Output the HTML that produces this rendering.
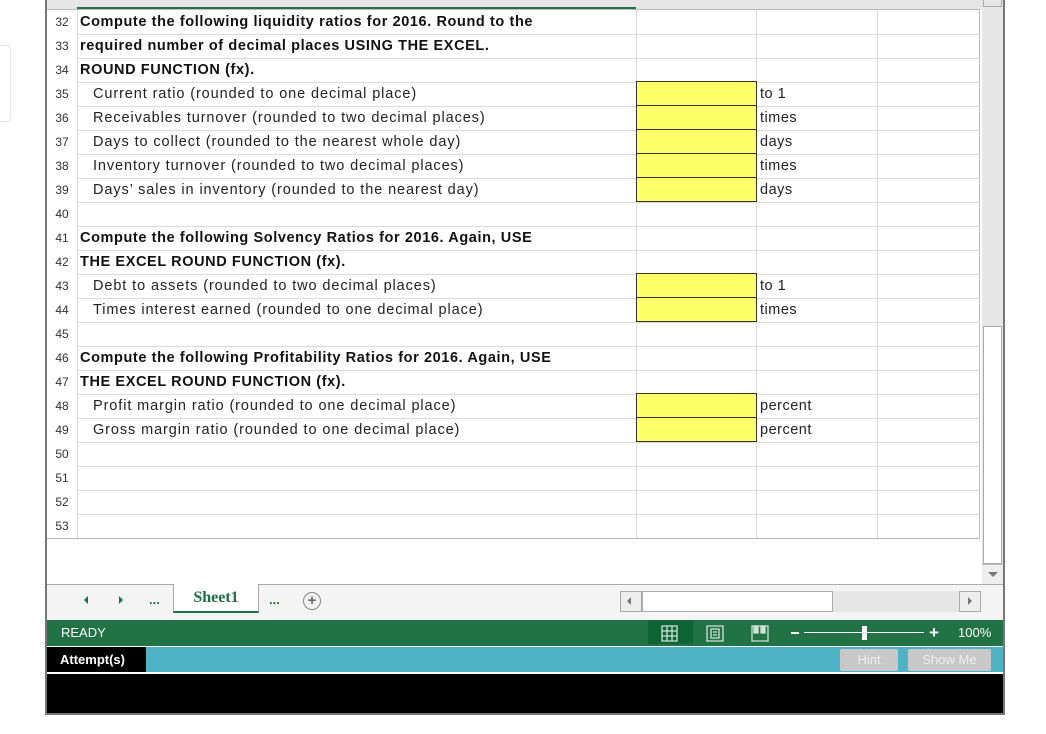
<!DOCTYPE html>
<html><head><style>
body{margin:0;width:1046px;height:734px;background:#fff;position:relative;overflow:hidden;font-family:"Liberation Sans",sans-serif}
.a{position:absolute}
.rn{position:absolute;left:47px;width:30px;font-size:12px;color:#333;text-align:center;line-height:24px}
.t{position:absolute;left:80px;font-size:14.5px;letter-spacing:0.9px;line-height:25px;color:#222;white-space:nowrap}
.b{font-weight:bold;letter-spacing:0.6px;color:#111}
.y{position:absolute;left:636px;width:119px;height:23px;background:#ffff66;border:1px solid #333;box-sizing:content-box}
.u{position:absolute;left:760px;font-size:14.5px;letter-spacing:0.5px;line-height:25px;color:#222}
</style></head><body>
<div class="a" style="left:0;top:45px;width:10px;height:75px;border:1px solid #e4e4e4;border-left:none;border-radius:0 4px 4px 0"></div>
<div class="a" style="left:45px;top:0;width:2px;height:715px;background:#777"></div>
<div class="a" style="left:1003px;top:0;width:2px;height:715px;background:#777"></div>
<div class="a" style="left:45px;top:713px;width:960px;height:2px;background:#777"></div>
<div class="a" style="left:47px;top:0;width:935px;height:9px;background:#e6e6e6"></div>
<div class="a" style="left:77px;top:7px;width:559px;height:2px;background:#217346"></div>
<div class="a" style="left:47px;top:9px;width:933px;height:1px;background:#bbb"></div>
<svg class="a" style="left:47px;top:10px" width="935" height="530">
<g stroke="#dadada" stroke-width="1">
<line x1="30.5" y1="0" x2="30.5" y2="528"/>
<line x1="589.5" y1="0" x2="589.5" y2="528"/>
<line x1="709.5" y1="0" x2="709.5" y2="528"/>
<line x1="830.5" y1="0" x2="830.5" y2="528"/>
<line x1="932.5" y1="0" x2="932.5" y2="528" stroke="#bbb"/>
<line x1="0" y1="528.5" x2="933" y2="528.5" stroke="#bbb"/>
</g>
<path stroke="#dadada" d="M30 24.5H933M30 48.5H933M30 72.5H933M30 96.5H933M30 120.5H933M30 144.5H933M30 168.5H933M30 192.5H933M30 216.5H933M30 240.5H933M30 264.5H933M30 288.5H933M30 312.5H933M30 336.5H933M30 360.5H933M30 384.5H933M30 408.5H933M30 432.5H933M30 456.5H933M30 480.5H933M30 504.5H933"/>
</svg>
<div class="rn" style="top:10px">32</div><div class="rn" style="top:34px">33</div><div class="rn" style="top:58px">34</div><div class="rn" style="top:82px">35</div><div class="rn" style="top:106px">36</div><div class="rn" style="top:130px">37</div><div class="rn" style="top:154px">38</div><div class="rn" style="top:178px">39</div><div class="rn" style="top:202px">40</div><div class="rn" style="top:226px">41</div><div class="rn" style="top:250px">42</div><div class="rn" style="top:274px">43</div><div class="rn" style="top:298px">44</div><div class="rn" style="top:322px">45</div><div class="rn" style="top:346px">46</div><div class="rn" style="top:370px">47</div><div class="rn" style="top:394px">48</div><div class="rn" style="top:418px">49</div><div class="rn" style="top:442px">50</div><div class="rn" style="top:466px">51</div><div class="rn" style="top:490px">52</div><div class="rn" style="top:514px">53</div>
<div class="t b" style="top:10px">Compute the following liquidity ratios for 2016. Round to the</div>
<div class="t b" style="top:34px">required number of decimal places USING THE EXCEL.</div>
<div class="t b" style="top:58px">ROUND FUNCTION (fx).</div>
<div class="t" style="top:82px;left:93px">Current ratio (rounded to one decimal place)</div>
<div class="t" style="top:106px;left:93px">Receivables turnover (rounded to two decimal places)</div>
<div class="t" style="top:130px;left:93px">Days to collect (rounded to the nearest whole day)</div>
<div class="t" style="top:154px;left:93px">Inventory turnover (rounded to two decimal places)</div>
<div class="t" style="top:178px;left:93px">Days’ sales in inventory (rounded to the nearest day)</div>
<div class="t b" style="top:226px">Compute the following Solvency Ratios for 2016. Again, USE</div>
<div class="t b" style="top:250px">THE EXCEL ROUND FUNCTION (fx).</div>
<div class="t" style="top:274px;left:93px">Debt to assets (rounded to two decimal places)</div>
<div class="t" style="top:298px;left:93px">Times interest earned (rounded to one decimal place)</div>
<div class="t b" style="top:346px">Compute the following Profitability Ratios for 2016. Again, USE</div>
<div class="t b" style="top:370px">THE EXCEL ROUND FUNCTION (fx).</div>
<div class="t" style="top:394px;left:93px">Profit margin ratio (rounded to one decimal place)</div>
<div class="t" style="top:418px;left:93px">Gross margin ratio (rounded to one decimal place)</div>
<div class="y" style="top:81px"></div><div class="y" style="top:105px"></div><div class="y" style="top:129px"></div><div class="y" style="top:153px"></div><div class="y" style="top:177px"></div>
<div class="y" style="top:273px"></div><div class="y" style="top:297px"></div>
<div class="y" style="top:393px"></div><div class="y" style="top:417px"></div>
<div class="u" style="top:82px">to 1</div><div class="u" style="top:106px">times</div><div class="u" style="top:130px">days</div><div class="u" style="top:154px">times</div><div class="u" style="top:178px">days</div>
<div class="u" style="top:274px">to 1</div><div class="u" style="top:298px">times</div>
<div class="u" style="top:394px">percent</div><div class="u" style="top:418px">percent</div>
<div class="a" style="left:982px;top:0;width:21px;height:584px;background:#e6e6e6"></div>
<div class="a" style="left:983px;top:0;width:17px;height:6px;border:1px solid #aaa;border-top:none;background:#e6e6e6"></div>
<div class="a" style="left:983px;top:326px;width:17px;height:236px;border:1px solid #aaa;background:#fff"></div>
<div class="a" style="left:982px;top:564px;width:20px;height:20px;border-top:1px solid #bbb;background:#eee"></div>
<div class="a" style="left:988px;top:572px;border-left:5px solid transparent;border-right:5px solid transparent;border-top:5px solid #777"></div>
<div class="a" style="left:47px;top:584px;width:956px;height:36px;background:#f4f4f4;border-top:1px solid #aaa"></div>
<div class="a" style="left:84px;top:596px;border-top:4px solid transparent;border-bottom:4px solid transparent;border-right:4px solid #1e6e44"></div>
<div class="a" style="left:119px;top:596px;border-top:4px solid transparent;border-bottom:4px solid transparent;border-left:4px solid #1e6e44"></div>
<div class="a" style="left:149px;top:592px;font-size:13px;font-weight:bold;color:#1e6e44">...</div>
<div class="a" style="left:173px;top:584px;width:84px;height:27px;background:#fff;border-left:1px solid #aaa;border-right:1px solid #aaa;border-bottom:2px solid #1e6e44;text-align:center;font:bold 16px 'Liberation Serif',serif;color:#1e6e44;line-height:28px">Sheet1</div>
<div class="a" style="left:269px;top:592px;font-size:13px;font-weight:bold;color:#1e6e44">...</div>
<div class="a" style="left:303px;top:592px;width:16px;height:16px;border:1.5px solid #888;border-radius:50%;text-align:center;font:bold 15px/16px 'Liberation Sans';color:#666">+</div>
<div class="a" style="left:620px;top:591px;width:361px;height:21px;background:#e6e6e6"></div>
<div class="a" style="left:620px;top:591px;width:20px;height:19px;border:1px solid #aaa;background:#eee"></div>
<div class="a" style="left:627px;top:597px;border-top:4px solid transparent;border-bottom:4px solid transparent;border-right:4px solid #777"></div>
<div class="a" style="left:642px;top:591px;width:189px;height:19px;border:1px solid #aaa;background:#fff"></div>
<div class="a" style="left:959px;top:591px;width:20px;height:19px;border:1px solid #aaa;background:#eee"></div>
<div class="a" style="left:968px;top:597px;border-top:4px solid transparent;border-bottom:4px solid transparent;border-left:4px solid #777"></div>
<div class="a" style="left:47px;top:620px;width:956px;height:26px;background:#217346"></div>
<div class="a" style="left:61px;top:620px;line-height:26px;font-size:13px;color:#fff">READY</div>
<div class="a" style="left:648px;top:620px;width:45px;height:24px;background:#0e6434"></div>
<svg class="a" style="left:660px;top:624px" width="120" height="18" fill="none" stroke="#cfe3d6" stroke-width="1.3">
<path d="M2 2h15v15H2zM2 7h15M2 12h15M7 2v15M12 2v15"/>
<path d="M47 2h16v15H47zM51 5h8v9h-8zM53 8h4M53 11h4"/>
<path d="M92 2h16v15H92z"/><path d="M94 2h4v7h-4zM101 2h4v7h-4z" fill="#cfe3d6"/>
</svg>
<div class="a" style="left:791px;top:632px;width:8px;height:2px;background:#fff"></div>
<div class="a" style="left:804px;top:632px;width:120px;height:1px;background:#fff"></div>
<div class="a" style="left:862px;top:626px;width:5px;height:14px;background:#fff"></div>
<div class="a" style="left:929px;top:620px;line-height:26px;font-size:17px;font-weight:bold;color:#fff">+</div>
<div class="a" style="left:958px;top:620px;line-height:26px;font-size:13px;color:#fff">100%</div>
<div class="a" style="left:47px;top:647px;width:956px;height:25px;background:#4bb3c4"></div>
<div class="a" style="left:47px;top:647px;width:99px;height:25px;background:#000;color:#fff;font-weight:bold;font-size:13px;line-height:25px;padding-left:13px;box-sizing:border-box">Attempt(s)</div>
<div class="a" style="left:840px;top:649px;width:58px;height:22px;background:#c8c8c8;border-radius:2px;color:#eee;font-size:13px;line-height:22px;text-align:center">Hint</div>
<div class="a" style="left:908px;top:649px;width:83px;height:22px;background:#c8c8c8;border-radius:2px;color:#eee;font-size:13px;line-height:22px;text-align:center">Show Me</div>
<div class="a" style="left:47px;top:674px;width:956px;height:39px;background:#000"></div>
</body></html>
